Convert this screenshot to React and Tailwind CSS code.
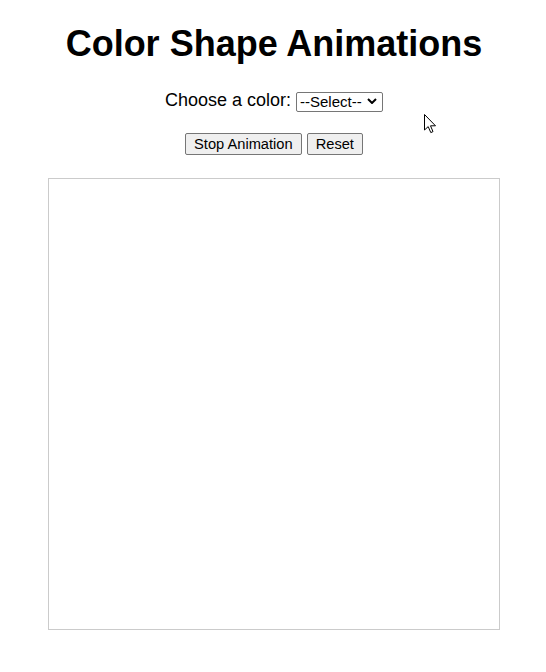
import React, { useState } from "react";

export default function App() {
  const [color, setColor] = useState("");
  const [running, setRunning] = useState(true);
  return (
    <div className="relative min-h-[672px] w-full bg-white text-black font-['Liberation_Sans',Arial,sans-serif]">
      <div className="flex flex-col items-center pl-[2px]">
        <h1 className="mt-[23px] text-[36px] leading-[42px] font-bold">Color Shape Animations</h1>
        <div className="mt-[25px] flex h-[20px] items-center gap-[5px]">
          <label htmlFor="color" className="text-[18px] leading-[21px]">Choose a color:</label>
          <div className="relative h-[20px] w-[87px]">
            <select
              id="color"
              value={color}
              onChange={(e) => setColor(e.target.value)}
              className="h-[20px] w-[87px] appearance-none rounded-[2px] border border-[#767676] bg-white pl-[3px] text-[15px] leading-[18px] text-black"
            >
              <option value="">--Select--</option>
              <option value="red">Red</option>
              <option value="green">Green</option>
              <option value="blue">Blue</option>
            </select>
            <svg className="pointer-events-none absolute left-[71px] top-[8px]" width="10" height="6" viewBox="0 0 10 6">
              <path d="M1 1 L5 5 L9 1" fill="none" stroke="#000" strokeWidth="2" />
            </svg>
          </div>
        </div>
        <div className="mt-[23px] flex gap-[5px]">
          <button
            onClick={() => setRunning(!running)}
            className="h-[22px] rounded-[2px] border border-[#767676] bg-[#efefef] px-[8px] text-[14.67px] leading-[18px]"
          >
            {running ? "Stop Animation" : "Start Animation"}
          </button>
          <button
            onClick={() => setColor("")}
            className="h-[22px] rounded-[2px] border border-[#767676] bg-[#efefef] px-[8px] text-[14.67px] leading-[18px]"
          >
            Reset
          </button>
        </div>
        <div className="mt-[23px] h-[452px] w-[452px] border border-[#cbcbcb] bg-white" />
      </div>
      <svg className="pointer-events-none absolute left-[424px] top-[114px]" width="13" height="20" viewBox="0 0 13 20">
        <path d="M0.5 0.5 L0.5 16 L4.2 12.6 L6.8 18.6 L9 17.6 L6.5 11.8 L11.5 11.8 Z" fill="#fff" stroke="#000" strokeWidth="1" strokeLinejoin="miter" />
      </svg>
    </div>
  );
}
